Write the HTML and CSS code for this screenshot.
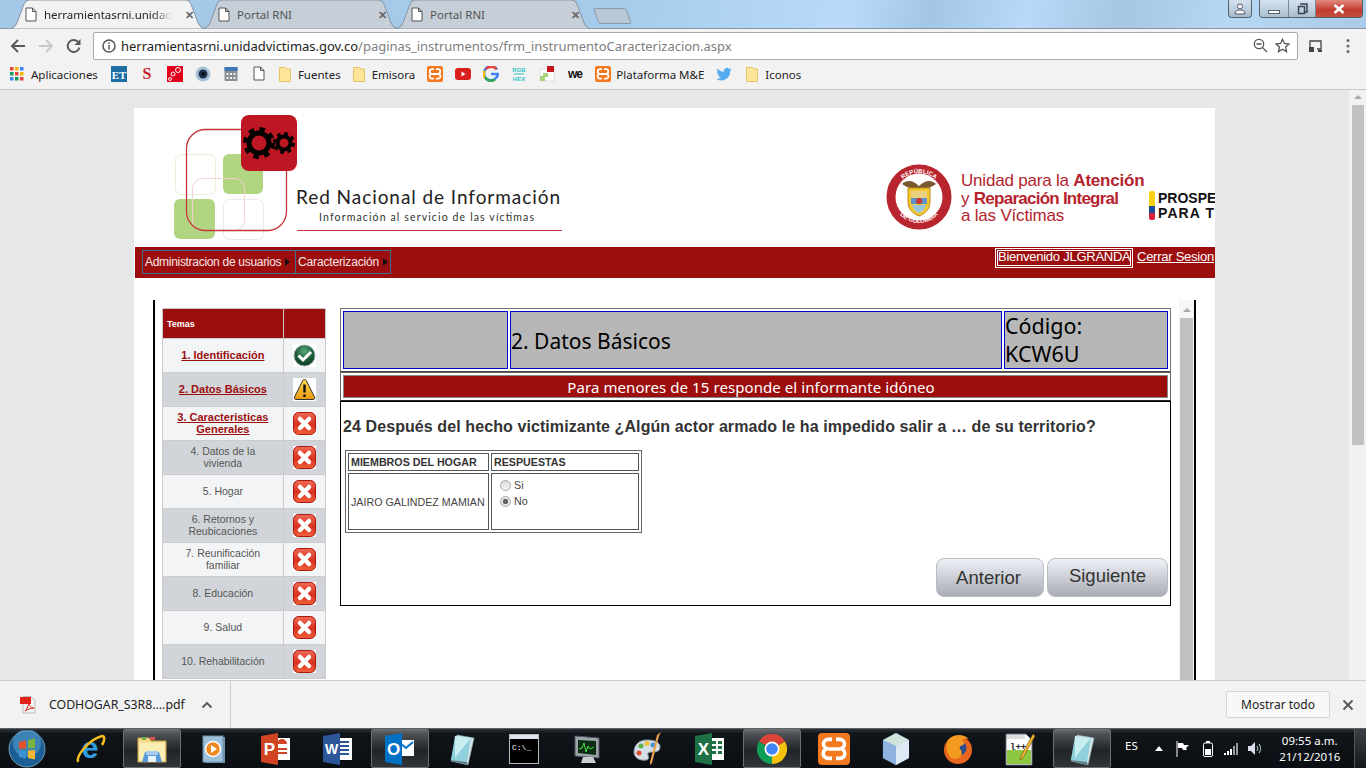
FILE: index.html
```html
<!DOCTYPE html>
<html lang="es">
<head>
    <meta charset="UTF-8">
    <title>Portal RNI</title>
    <link rel="stylesheet" href="styles.css">
</head>
<body>
    <svg class="defs" width="0" height="0">
        <defs>
            <radialGradient id="gCheck" cx="50%" cy="30%" r="70%"><stop offset="0" stop-color="#5aa878"/><stop offset=".6" stop-color="#1c5c38"/><stop offset="1" stop-color="#0b3a20"/></radialGradient>
            <linearGradient id="gWarn" x1="0" y1="0" x2="0" y2="1"><stop offset="0" stop-color="#ffd84a"/><stop offset="1" stop-color="#eb9a12"/></linearGradient>
            <linearGradient id="gFail" x1="0" y1="0" x2="0" y2="1"><stop offset="0" stop-color="#ee6a55"/><stop offset=".55" stop-color="#d9301f"/><stop offset="1" stop-color="#f0623a"/></linearGradient>
            <symbol id="tabShape" viewBox="0 0 199 28" preserveAspectRatio="none">
                <path d="M0 28c5 0 7-2 9-6l7-18c1-3 3-4 6-4h155c3 0 5 1 6 4l7 18c2 4 4 6 9 6z" stroke="#8b98a8" stroke-width="1"/>
            </symbol>
            <symbol id="doc" viewBox="0 0 12 15">
                <path d="M1 1h6.500l3.500 3.500v9.500h-10zM7.500 1v3.500h3.500" fill="#fff" stroke="#555" stroke-width="1"/>
            </symbol>
            <symbol id="folder" viewBox="0 0 12 15">
                <path d="M.5.500h6l1 1.500h4v12.500h-11z" fill="#fde69a" stroke="#e6c266"/>
            </symbol>
            <symbol id="xampp" viewBox="0 0 16 16">
                <rect width="16" height="16" rx="2" fill="#f2791f"/>
                <path d="M7 3.200H5.200a2.300 2.300 0 0 0-.3 4.600 2.300 2.300 0 0 0 .3 4.900H7M9 3.200h1.800a2.300 2.300 0 0 1 .3 4.600 2.300 2.300 0 0 1-.3 4.900H9M5 8h6" fill="none" stroke="#fff" stroke-width="1.800"/>
            </symbol>
            <symbol id="fail" viewBox="0 0 23 23">
                <rect width="23" height="23" fill="#fff"/>
                <rect x=".5" y=".5" width="22" height="22" rx="5" fill="url(#gFail)" stroke="#a8180f"/>
                <path d="M7 7l9 9M16 7l-9 9" stroke="#fff" stroke-width="4.500" stroke-linecap="round"/>
            </symbol>
            <symbol id="notepad" viewBox="0 0 30 34">
                <path d="M10 3l17 3-6 27-17-4z" fill="#d8e6ea" stroke="#8aa" stroke-width=".6"/>
                <path d="M8 4l16 2-4 24-16-2z" fill="#8fd0dc"/>
                <path d="M8 4l16 2-10 12-6 8z" fill="#c9eef2"/>
                <path d="M4 28l16 2 1 3-17-4z" fill="#5e7f8c"/>
            </symbol>
        </defs>
    </svg>

    <header class="chrome-top">
        <div class="tabstrip">
            <div class="tab tab-active">
                <svg class="tab-bg"><use href="#tabShape"/></svg>
                <svg class="tab-icon"><use href="#doc"/></svg>
                <span class="tab-title tab-fade">herramientasrni.unidadv</span>
                <span class="tab-close">✕</span>
            </div>
            <div class="tab">
                <svg class="tab-bg"><use href="#tabShape"/></svg>
                <svg class="tab-icon"><use href="#doc"/></svg>
                <span class="tab-title">Portal RNI</span>
                <span class="tab-close">✕</span>
            </div>
            <div class="tab">
                <svg class="tab-bg"><use href="#tabShape"/></svg>
                <svg class="tab-icon"><use href="#doc"/></svg>
                <span class="tab-title">Portal RNI</span>
                <span class="tab-close">✕</span>
            </div>
            <div class="newtab"></div>
            <div class="win-controls">
                <div class="win-btn win-user">
                    <svg width="12" height="12" viewBox="0 0 12 12"><circle cx="6" cy="3.500" r="2.500" fill="#fff" stroke="#556"/><path d="M1 11c0-3 2-4 5-4s5 1 5 4z" fill="#fff" stroke="#556"/></svg>
                </div>
                <div class="win-group">
                    <div class="win-btn win-min"><span class="min-bar"></span></div>
                    <div class="win-btn win-max"><svg width="11" height="12" viewBox="0 0 11 12"><path d="M3 1h7v8H8M1.500 3.500h6v7h-6z" fill="none" stroke="#3a4450" stroke-width="1.500"/></svg></div>
                    <div class="win-btn win-close"><svg width="12" height="10" viewBox="0 0 12 10"><path d="M1.500 1l9 8M10.500 1l-9 8" stroke="#fff" stroke-width="2.600"/></svg></div>
                </div>
            </div>
        </div>

        <div class="toolbar">
            <svg class="nav-icon" width="16" height="16" viewBox="0 0 16 16"><path d="M15 8H2M8 2L2 8l6 6" fill="none" stroke="#5a5a5a" stroke-width="2"/></svg>
            <svg class="nav-icon" width="16" height="16" viewBox="0 0 16 16"><path d="M1 8h13M8 2l6 6-6 6" fill="none" stroke="#c8c8c8" stroke-width="2"/></svg>
            <svg class="nav-icon" width="16" height="16" viewBox="0 0 16 16"><path d="M13.500 9.500A6 6 0 1 1 12 3.800" fill="none" stroke="#5a5a5a" stroke-width="2"/><path d="M14.500 1v6h-6z" fill="#5a5a5a"/></svg>
            <div class="omnibox">
                <svg width="14" height="14" viewBox="0 0 14 14"><circle cx="7" cy="7" r="6" fill="none" stroke="#555" stroke-width="1.500"/><path d="M7 6v4.500M7 3.500v1.500" stroke="#555" stroke-width="1.500"/></svg>
                <span class="url"><b class="url-host">herramientasrni.unidadvictimas.gov.co</b>/paginas_instrumentos/frm_instrumentoCaracterizacion.aspx</span>
                <svg width="15" height="15" viewBox="0 0 15 15"><circle cx="6" cy="6" r="4.700" fill="none" stroke="#555" stroke-width="1.300"/><path d="M3.500 6h5M9.500 9.500l4.500 4.500" stroke="#555" stroke-width="1.300"/></svg>
                <svg class="star" width="15" height="15" viewBox="0 0 15 15"><path d="M7.500 1.300l1.900 4.200 4.600.5-3.400 3.100.9 4.500-4-2.300-4 2.300.9-4.500L1 6l4.600-.5z" fill="none" stroke="#555" stroke-width="1.300"/></svg>
            </div>
            <svg class="ext-icon" width="15" height="14" viewBox="0 0 15 14"><path d="M2 8V2h11v8h-4" fill="none" stroke="#444" stroke-width="1.300"/><path d="M1 8h5v5H1zM10 11h4v2h-4z" fill="#444"/></svg>
            <svg class="menu-icon" width="4" height="16" viewBox="0 0 4 16"><circle cx="2" cy="2.500" r="1.500" fill="#666"/><circle cx="2" cy="8" r="1.500" fill="#666"/><circle cx="2" cy="13.500" r="1.500" fill="#666"/></svg>
        </div>

        <div class="bookmarks">
            <div class="bm bm-apps">
                <svg width="14" height="14" viewBox="0 0 14 14">
                    <path d="M0 0h3.500v3.500H0z" fill="#e8453c"/><path d="M5 0h3.500v3.500H5z" fill="#f4b400"/><path d="M10 0h3.500v3.500H10z" fill="#4285f4"/>
                    <path d="M0 5h3.500v3.500H0z" fill="#0f9d58"/><path d="M5 5h3.500v3.500H5z" fill="#e8453c"/><path d="M10 5h3.500v3.500H10z" fill="#f4b400"/>
                    <path d="M0 10h3.500v3.500H0z" fill="#4285f4"/><path d="M5 10h3.500v3.500H5z" fill="#0f9d58"/><path d="M10 10h3.500v3.500H10z" fill="#e8453c"/>
                </svg>
                <span>Aplicaciones</span>
            </div>
            <svg class="fav" viewBox="0 0 16 16"><rect width="16" height="16" fill="#1c6ea4"/><text x="8" y="13" class="fav-et">ET</text></svg>
            <svg class="fav" viewBox="0 0 16 16"><text x="8" y="13" class="fav-s">S</text></svg>
            <svg class="fav" viewBox="0 0 16 16"><rect width="16" height="16" fill="#e3001b"/><circle cx="11" cy="4" r="2.500" fill="none" stroke="#fff"/><circle cx="6" cy="8" r="2" fill="none" stroke="#fff"/><circle cx="3" cy="13" r="1.500" fill="none" stroke="#fff"/></svg>
            <svg class="fav" viewBox="0 0 16 16"><circle cx="8" cy="8" r="7.500" fill="#a9c2d8"/><circle cx="8" cy="8" r="4.500" fill="#1c3350"/><circle cx="8" cy="8" r="1.800" fill="#000"/></svg>
            <svg class="fav" viewBox="0 0 16 16"><rect x="1.500" y="1" width="13" height="14" rx="1" fill="#8a8f94"/><rect x="1.500" y="1" width="13" height="4" fill="#3f78b5"/><path d="M3.500 7h2v2h-2zM7 7h2v2H7zM10.500 7h2v2h-2zM3.500 11h2v2h-2zM7 11h2v2H7zM10.500 11h2v2h-2z" fill="#eee"/></svg>
            <svg class="fav" viewBox="0 0 16 16"><use href="#doc" x="2" y="0" width="12" height="15"/></svg>
            <div class="bm bm-folder"><svg width="12" height="15"><use href="#folder"/></svg><span>Fuentes</span></div>
            <div class="bm bm-folder"><svg width="12" height="15"><use href="#folder"/></svg><span>Emisora</span></div>
            <svg class="fav" viewBox="0 0 16 16"><use href="#xampp"/></svg>
            <svg class="fav" viewBox="0 0 16 16"><rect y="2" width="16" height="12" rx="3" fill="#d9201f"/><path d="M6.500 5.500l4 2.500-4 2.500z" fill="#fff"/></svg>
            <svg class="fav" viewBox="0 0 16 16"><path d="M14 3.500A7 7 0 1 0 15 8H8" fill="none" stroke="#4285f4" stroke-width="2.500"/><path d="M3 3A7 7 0 0 1 13.500 3" fill="none" stroke="#e8453c" stroke-width="2.500"/><path d="M2 11.500A7 7 0 0 0 12 13.500" fill="none" stroke="#34a853" stroke-width="2.500"/><path d="M1.500 4.500a7 7 0 0 0 0 7" fill="none" stroke="#fbbc05" stroke-width="2.500"/></svg>
            <svg class="fav" viewBox="0 0 16 16"><text x="8" y="6" class="fav-rgb">RGB</text><path d="M3 8h10" stroke="#33c3c3"/><text x="8" y="15" class="fav-rgb">HEX</text></svg>
            <svg class="fav" viewBox="0 0 16 16"><rect x="1" y="3" width="14" height="12" fill="#fff" stroke="#ddd"/><rect x="8" y="0" width="7" height="6" fill="#c5161d"/><rect x="4" y="7" width="5" height="4" fill="#a8d27a"/><rect x="1" y="10" width="5" height="5" fill="#a8d27a"/></svg>
            <svg class="fav" viewBox="0 0 16 16"><text x="8" y="12" class="fav-we">we</text></svg>
            <div class="bm bm-plain"><svg width="16" height="16" viewBox="0 0 16 16"><use href="#xampp"/></svg><span>Plataforma M&amp;E</span></div>
            <svg class="fav" viewBox="0 0 16 16"><path d="M15.500 3.300c-.6.300-1.200.4-1.800.5.700-.4 1.100-1 1.400-1.700-.6.400-1.300.6-2 .8a3.100 3.100 0 0 0-5.300 2.800C5.200 5.600 2.900 4.300 1.400 2.400c-.8 1.400-.4 3.200 1 4.100-.5 0-1-.2-1.400-.4 0 1.500 1 2.800 2.500 3.100-.5.100-1 .1-1.400 0 .4 1.200 1.600 2.100 2.900 2.100A6.300 6.300 0 0 1 .5 13a8.800 8.800 0 0 0 13.600-7.800c.6-.5 1-1.200 1.400-1.900z" fill="#55acee"/></svg>
            <div class="bm bm-folder bm-last"><svg width="12" height="15"><use href="#folder"/></svg><span>Iconos</span></div>
        </div>
    </header>

    <main class="viewport">
        <div class="sheet">
            <div class="site-header">
                <svg class="rni-logo" width="392" height="126" viewBox="0 0 392 126">
                    <rect x="3.500" y="40.500" width="40" height="40" rx="6" fill="#fff" stroke="#e6efd8"/>
                    <rect x="51" y="40" width="40" height="40" rx="6" fill="#b2d582"/>
                    <rect x="2" y="85" width="41" height="40" rx="6" fill="#b2d582"/>
                    <rect x="51.500" y="85.500" width="40" height="40" rx="6" fill="none" stroke="#efe8e9"/>
                    <rect x="20.500" y="78.500" width="52" height="52" rx="10" fill="none" stroke="#f2d2d4" transform="translate(0 -14)"/>
                    <rect x="14.500" y="15.500" width="100" height="101" rx="19" fill="none" stroke="#c8343d" stroke-width="1.300"/>
                    <rect x="69" y="1" width="56" height="56" rx="8" fill="#bc1722"/>
                    <circle cx="87" cy="29" r="10" fill="none" stroke="#000" stroke-width="5"/>
                    <circle cx="87" cy="29" r="14" fill="none" stroke="#000" stroke-width="4" stroke-dasharray="5.500 5.500"/>
                    <circle cx="112" cy="29" r="6.500" fill="none" stroke="#000" stroke-width="4"/>
                    <circle cx="112" cy="29" r="9.500" fill="none" stroke="#000" stroke-width="3" stroke-dasharray="3.730 3.730"/>
                    <text x="124" y="90" class="logo-title" textLength="264">Red Nacional de Información</text>
                    <text x="147" y="107" class="logo-sub" textLength="215">Información al servicio de las víctimas</text>
                    <path d="M125 116.500h265" stroke="#c8343d"/>
                </svg>
                <div class="partner-logos">
                    <svg class="escudo" width="66" height="66" viewBox="0 0 66 66">
                        <circle cx="33" cy="33" r="28" fill="#fff" stroke="#b9252e" stroke-width="9"/>
                        <path id="arcTop" d="M9 33a24 24 0 0 1 48 0" fill="none"/>
                        <path id="arcBot" d="M7 33a26 26 0 0 0 52 0" fill="none"/>
                        <text class="escudo-text"><textPath href="#arcTop" startOffset="50%">REPÚBLICA</textPath></text>
                        <text class="escudo-text"><textPath href="#arcBot" startOffset="50%">DE COLOMBIA</textPath></text>
                        <path d="M16 20c6-5 11-3 17 2 6-5 11-7 17-2-4 3-9 5-17 5s-13-2-17-5z" fill="#7a5a30"/>
                        <path d="M22 24h22v14c0 8-6 12-11 14-5-2-11-6-11-14z" fill="#f3c92f" stroke="#b88a1d"/>
                        <rect x="25" y="27" width="16" height="7" fill="#e8d080"/>
                        <rect x="25" y="34" width="16" height="6" fill="#5f93c8"/>
                        <path d="M26 41h14c-1 4-4 7-7 8-3-1-6-4-7-8z" fill="#9bc7dd"/>
                        <circle cx="33" cy="37" r="3" fill="#c33"/>
                    </svg>
                    <div class="unidad">
                        <div>Unidad para la <b>Atención</b></div>
                        <div>y <b class="tight">Reparación Integral</b></div>
                        <div>a las Víctimas</div>
                    </div>
                    <div class="prospera">
                        <div class="flagbar"></div>
                        <div class="prospera-text">PROSPE<br><span class="wide">PARA T</span></div>
                    </div>
                </div>
            </div>

            <nav class="navbar">
                <div class="menu">
                    <a class="menu-item menu-admin">Administracion de usuarios<i class="caret"></i></a>
                    <a class="menu-item menu-car">Caracterización<i class="caret"></i></a>
                </div>
                <div class="user-links">
                    <span class="welcome">Bienvenido JLGRANDA</span>
                    <a class="logout">Cerrar Sesion</a>
                </div>
            </nav>

            <div class="frame">
                <table class="topics">
                    <tr class="topics-head"><th class="topic-name">Temas</th><th class="topic-state"></th></tr>
                    <tr class="light"><td class="topic-name"><a>1. Identificación</a></td>
                        <td class="topic-state"><svg width="23" height="23" viewBox="0 0 23 23"><rect width="23" height="23" fill="#fff"/><circle cx="11.500" cy="11.500" r="10.500" fill="url(#gCheck)" stroke="#9aa"/><path d="M5.500 11.500l4.500 4.500 8-8" fill="none" stroke="#fff" stroke-width="3"/></svg></td></tr>
                    <tr class="dark"><td class="topic-name"><a>2. Datos Básicos</a></td>
                        <td class="topic-state"><svg width="23" height="23" viewBox="0 0 23 23"><rect width="23" height="23" fill="#fff"/><path d="M11.500 1.500c1 0 1.500.5 2 1.500l8 16c.5 1.500 0 2.500-1.500 2.500h-17c-1.500 0-2-1-1.500-2.500l8-16c.5-1 1-1.500 2-1.500z" fill="url(#gWarn)" stroke="#333"/><path d="M11.500 6.500v8M11.500 16.500v2.500" stroke="#111" stroke-width="2.400"/></svg></td></tr>
                    <tr class="light"><td class="topic-name"><a>3. Caracteristicas<br>Generales</a></td>
                        <td class="topic-state"><svg width="23" height="23"><use href="#fail"/></svg></td></tr>
                    <tr class="dark"><td class="topic-name">4. Datos de la<br>vivienda</td>
                        <td class="topic-state"><svg width="23" height="23"><use href="#fail"/></svg></td></tr>
                    <tr class="light"><td class="topic-name">5. Hogar</td>
                        <td class="topic-state"><svg width="23" height="23"><use href="#fail"/></svg></td></tr>
                    <tr class="dark"><td class="topic-name">6. Retornos y<br>Reubicaciones</td>
                        <td class="topic-state"><svg width="23" height="23"><use href="#fail"/></svg></td></tr>
                    <tr class="light"><td class="topic-name">7. Reunificación<br>familiar</td>
                        <td class="topic-state"><svg width="23" height="23"><use href="#fail"/></svg></td></tr>
                    <tr class="dark"><td class="topic-name">8. Educación</td>
                        <td class="topic-state"><svg width="23" height="23"><use href="#fail"/></svg></td></tr>
                    <tr class="light"><td class="topic-name">9. Salud</td>
                        <td class="topic-state"><svg width="23" height="23"><use href="#fail"/></svg></td></tr>
                    <tr class="dark"><td class="topic-name">10. Rehabilitación</td>
                        <td class="topic-state"><svg width="23" height="23"><use href="#fail"/></svg></td></tr>
                </table>

                <div class="form-col">
                    <table class="title-table">
                        <tr>
                            <td class="title-blank"></td>
                            <td class="title-main">2. Datos Básicos</td>
                            <td class="title-code">Código:<br>KCW6U</td>
                        </tr>
                    </table>
                    <table class="notice-table">
                        <tr><td>Para menores de 15 responde el informante idóneo</td></tr>
                    </table>
                    <section class="question">
                        <h3>24 Después del hecho victimizante ¿Algún actor armado le ha impedido salir a … de su territorio?</h3>
                        <table class="answers">
                            <tr><th class="col-member">MIEMBROS DEL HOGAR</th><th class="col-answer">RESPUESTAS</th></tr>
                            <tr>
                                <td class="col-member">JAIRO GALINDEZ MAMIAN</td>
                                <td class="col-answer options">
                                    <label class="opt"><input type="radio" name="r24" disabled> Si</label>
                                    <label class="opt"><input type="radio" name="r24" checked disabled> No</label>
                                </td>
                            </tr>
                        </table>
                        <div class="form-buttons">
                            <button class="btn btn-prev">Anterior</button>
                            <button class="btn btn-next">Siguiente</button>
                        </div>
                    </section>
                </div>

                <div class="inner-scroll"><div class="arrow-up"></div><div class="inner-thumb"></div></div>
            </div>
        </div>
        <div class="page-scroll"><div class="arrow-up"></div><div class="page-thumb"></div></div>
    </main>

    <div class="downloads">
        <svg class="pdf-icon" width="16" height="18" viewBox="0 0 16 18"><path d="M3 .5h8l4 4V17H3z" fill="#f4f4f4" stroke="#bbb"/><rect y="1" width="11" height="7" fill="#e2231a"/><path d="M5 15c2-2 4-6 3.500-8C10 11 12 12 14 12c-3 0-6 1-9 3z" fill="none" stroke="#e2231a"/></svg>
        <span class="dl-name">CODHOGAR_S3R8....pdf</span>
        <svg class="dl-chevron" width="12" height="8" viewBox="0 0 12 8"><path d="M1.500 6.500L6 2l4.500 4.500" fill="none" stroke="#555" stroke-width="1.800"/></svg>
        <div class="dl-sep"></div>
        <button class="dl-all">Mostrar todo</button>
        <svg class="dl-close" width="12" height="12" viewBox="0 0 12 12"><path d="M1.500 1.500l9 9M10.500 1.500l-9 9" stroke="#555" stroke-width="1.800"/></svg>
    </div>

    <footer class="taskbar">
        <div class="start-orb">
            <svg width="38" height="38" viewBox="0 0 38 38"><circle cx="19" cy="19" r="18" fill="#1d5f94" stroke="#6b9ab8"/><circle cx="19" cy="13" r="14" fill="#5ea7d6" opacity=".5"/><path d="M11 12l7-1.500v8l-7 .5z" fill="#e2522c"/><path d="M20 10l7-1.500v9.500l-7 .5z" fill="#7ab542"/><path d="M11 21l7-.5v8l-7-1.500z" fill="#3c94d6"/><path d="M20 20.500l7-.5v9.500l-7-1.500z" fill="#f2b632"/></svg>
        </div>
        <div class="apps">
            <div class="app"><svg width="32" height="34" viewBox="0 0 32 34"><text x="16" y="26" class="ic-ie">e</text><path d="M4 30c-2-6 10-22 24-26 3 0 3 4 0 9" fill="none" stroke="#f2bd1d" stroke-width="2.500"/></svg></div>
            <div class="app app-on"><svg width="32" height="32" viewBox="0 0 32 32"><path d="M2 5h11l2 3h15v21H2z" fill="#f7dd8c" stroke="#c9a64a"/><path d="M3 10h26v18H3z" fill="#fbeeb4"/><path d="M6 4h4v3H6z" fill="#6ab04c"/><path d="M14 4h5v3h-5z" fill="#d9534f"/><path d="M9 19h14l3 10H6z" fill="#5b9bd5"/><path d="M10 18h12v4H10z" fill="#a6cff0"/><path d="M12 23h8v6h-8z" fill="#e8f3fb"/></svg></div>
            <div class="app"><svg width="28" height="32" viewBox="0 0 28 32"><rect x="5" y="4" width="20" height="26" fill="#6c96b4"/><rect x="3" y="3" width="20" height="26" fill="#9dc0d8" stroke="#6c8ea6"/><circle cx="13" cy="16" r="7.500" fill="#ee8a1d" stroke="#fff" stroke-width="1.500"/><path d="M11 12l6 4-6 4z" fill="#fff"/></svg></div>
            <div class="app"><svg width="30" height="34" viewBox="0 0 30 34"><path d="M13 6h16v22H13z" fill="#fff"/><path d="M16 12a5 5 0 0 1 10 0h-5zM16 16h10v2H16zM16 20h10v2H16z" fill="#d04423"/><path d="M0 4l17-3v32L0 30z" fill="#d04423"/><text x="8.500" y="23" class="ic-letter">P</text></svg></div>
            <div class="app"><svg width="30" height="34" viewBox="0 0 30 34"><path d="M13 6h16v22H13z" fill="#fff"/><path d="M16 9h10v2H16zM16 13h10v2H16zM16 17h10v2H16zM16 21h10v2H16z" fill="#2b579a"/><path d="M0 4l17-3v32L0 30z" fill="#2b579a"/><text x="8.500" y="22" class="ic-letter ic-sm">W</text></svg></div>
            <div class="app app-on"><svg width="30" height="34" viewBox="0 0 30 34"><path d="M13 8h16v16H13z" fill="#fff"/><path d="M14 10l7 6 7-6" fill="none" stroke="#0072c6" stroke-width="2"/><path d="M0 4l17-3v32L0 30z" fill="#0072c6"/><text x="8.500" y="23" class="ic-letter">O</text></svg></div>
            <div class="app"><svg width="30" height="34" viewBox="0 0 30 34"><use href="#notepad"/></svg></div>
            <div class="app"><svg width="30" height="30" viewBox="0 0 30 30"><rect x=".5" y=".5" width="29" height="29" fill="#000" stroke="#bbb"/><rect x="1" y="1" width="28" height="4" fill="#dfe5ea"/><text x="3" y="16" class="ic-cmd">C:\_</text></svg></div>
            <div class="app"><svg width="30" height="34" viewBox="0 0 30 34"><path d="M4 4l24 2v20L4 24z" fill="#9aa4a8" stroke="#556"/><path d="M7 8l18 1v14L7 21z" fill="#0b2b12"/><path d="M8 17l3-1 2-5 2 9 2-6 2 3 4-2" fill="none" stroke="#4de04d"/><path d="M12 25h10l3 6H10z" fill="#c8ced2"/></svg></div>
            <div class="app"><svg width="30" height="36" viewBox="0 0 30 36"><path d="M14 9C5 9 1 15 1 21c0 6 6 9 12 8 3 0 3-3 2-5s1-3 4-3 8 0 8-5-6-7-13-7z" fill="#d4dfe8" stroke="#8a9aa8"/><circle cx="8" cy="15" r="2.500" fill="#5fb346"/><circle cx="14" cy="12.500" r="2.500" fill="#f0c330"/><circle cx="6" cy="22" r="2.500" fill="#e04f2f"/><circle cx="20" cy="14" r="2.500" fill="#3d8fd6"/><path d="M28 1l-2 4-7 27-2 2 0-3 7-27z" fill="#e6a050"/></svg></div>
            <div class="app"><svg width="30" height="34" viewBox="0 0 30 34"><path d="M13 6h16v22H13z" fill="#fff"/><path d="M17 9h4v3h-4zM23 9h4v3h-4zM17 14h4v3h-4zM23 14h4v3h-4zM17 19h4v3h-4zM23 19h4v3h-4z" fill="#1e7145"/><path d="M0 4l17-3v32L0 30z" fill="#1e7145"/><text x="8.500" y="23" class="ic-letter">X</text></svg></div>
            <div class="app app-on"><svg width="30" height="30" viewBox="0 0 30 30"><path d="M15 15L28 7.500A15 15 0 0 0 2 7.500z" fill="#db4437"/><path d="M15 15L15 30A15 15 0 0 0 28 7.500z" fill="#f4c20d"/><path d="M15 15L2 7.500A15 15 0 0 0 15 30z" fill="#0f9d58"/><circle cx="15" cy="15" r="7.500" fill="#fff"/><circle cx="15" cy="15" r="5.800" fill="#4285f4"/></svg></div>
            <div class="app"><svg width="32" height="32" viewBox="0 0 16 16"><use href="#xampp"/></svg></div>
            <div class="app"><svg width="28" height="34" viewBox="0 0 28 34"><path d="M14 1l13 7v18l-13 7-13-7V8z" fill="#b9d3ea" stroke="#26304a" stroke-width=".8"/><path d="M14 1l13 7-13 6L1 8z" fill="#cfe4da"/><path d="M14 14v19l13-7V8z" fill="#dfe9f5"/><path d="M14 14v19L1 26V8z" fill="#8fb3e0"/></svg></div>
            <div class="app"><svg width="30" height="32" viewBox="0 0 30 32"><circle cx="15" cy="17" r="14" fill="#e8651d"/><circle cx="16" cy="15" r="7.500" fill="#2a4d8f"/><path d="M5 7c5-6 15-7 21-1-4-1-6 0-7 2 3 0 3 3 1 4-4 1-4 3-2 5 2 3 0 9-6 9C6 26 1 16 5 7z" fill="#f39a1f"/></svg></div>
            <div class="app"><svg width="32" height="34" viewBox="0 0 32 34"><path d="M2 2h20l6 6v25H2z" fill="#fff" stroke="#667"/><path d="M3 18h24v14H3z" fill="#8dc63f"/><path d="M3 3h18v4H3z" fill="#ddd"/><text x="6" y="18" class="ic-npp">l++</text><path d="M29 2l2 2-12 22-3 2 1-4z" fill="#f2b632" stroke="#6b4b12" stroke-width=".6"/></svg></div>
            <div class="app app-on"><svg width="30" height="34" viewBox="0 0 30 34"><use href="#notepad"/></svg></div>
        </div>
        <div class="tray">
            <span class="tray-lang">ES</span>
            <svg width="8" height="5" viewBox="0 0 8 5"><path d="M0 5l4-5 4 5z" fill="#fff"/></svg>
            <svg width="14" height="16" viewBox="0 0 14 16"><path d="M1 0v16" stroke="#fff"/><path d="M2 2h5l1 2h5l-3 3 1 2H7L6 7H2z" fill="#fff"/></svg>
            <svg width="10" height="16" viewBox="0 0 10 16"><rect x=".5" y="2" width="9" height="13.500" rx="1.500" fill="none" stroke="#fff"/><path d="M3 0h4v2H3z" fill="#fff"/><rect x="2" y="8" width="6" height="6" fill="#fff"/></svg>
            <svg class="tray-signal" width="14" height="12" viewBox="0 0 14 12"><path d="M0 10h2v2H0zM3 8h2v4H3zM6 6h2v6H6z" fill="#fff"/><path d="M9 3h2v9H9zM12 0h2v12h-2z" fill="#999"/></svg>
            <svg class="tray-sound" width="15" height="15" viewBox="0 0 15 15"><path d="M0 5h3l4-4v13l-4-4H0z" fill="#dde"/><path d="M9 5c1 1.500 1 3.500 0 5M11 3c2 2.500 2 6.500 0 9" fill="none" stroke="#cdd" stroke-width="1"/></svg>
            <div class="clock"><div>09:55 a.m.</div><div>21/12/2016</div></div>
            <div class="show-desktop"></div>
        </div>
    </footer>
</body>
</html>
```

FILE: styles.css
```css
* {
    box-sizing: border-box;
}
html, body {
    height: 100%;
}
body {
    margin: 0;
    width: 1366px;
    height: 768px;
    overflow: hidden;
    display: flex;
    flex-direction: column;
    font-family: "Liberation Sans", Arial, sans-serif;
    background: #f2f2f2;
}
.defs {
    position: absolute;
}
table {
    border-collapse: separate;
}

/* browser chrome */
.chrome-top {
    height: 90px;
    flex: none;
    font-family: "Noto Sans", sans-serif;
}
.tabstrip {
    height: 29px;
    display: flex;
    padding-left: 8px;
    background: linear-gradient(102deg, #a4c8e8 0%, #a6cbea 45%, #b9dbf9 62%, #a2c6e4 68%, #b8daf8 75%, #a5c7e3 82%, #b6d8f5 90%, #a9cbe8 100%);
    border-bottom: 1px solid #8b98a8;
}
.tab {
    position: relative;
    width: 199px;
    height: 29px;
    margin-right: -6px;
    padding-left: 17px;
    display: flex;
    align-items: center;
}
.tab-active {
    z-index: 2;
}
.tab-bg {
    position: absolute;
    left: 0;
    top: 0;
    width: 199px;
    height: 29px;
    fill: #c6ced7;
}
.tab-active .tab-bg {
    fill: #f2f2f2;
}
.tab-icon {
    position: relative;
    width: 12px;
    height: 15px;
    margin-right: 7px;
    flex: none;
}
.tab-title {
    position: relative;
    width: 128px;
    font-size: 11.500px;
    color: #555;
    white-space: nowrap;
    overflow: hidden;
}
.tab-fade {
    color: #222;
    -webkit-mask-image: linear-gradient(90deg, #000 85%, transparent);
    mask-image: linear-gradient(90deg, #000 85%, transparent);
}
.tab-close {
    position: relative;
    margin-left: 13px;
    font-size: 11px;
    font-weight: bold;
    color: #666;
}
.newtab {
    width: 33px;
    height: 16px;
    margin: 8px 0 0 9px;
    background: #b9c8d6;
    border: 1px solid #8b98a8;
    border-radius: 2px;
    transform: skewX(20deg);
}
.win-controls {
    margin-left: auto;
    margin-right: 3px;
    display: flex;
    gap: 7px;
    height: 18px;
}
.win-btn {
    height: 18px;
    display: flex;
    align-items: center;
    justify-content: center;
    background: linear-gradient(#d4e2ee, #a9bccd);
}
.win-user {
    width: 24px;
    border: 1px solid #54606e;
    border-top: 0;
    border-radius: 0 0 4px 4px;
}
.win-group {
    display: flex;
    border: 1px solid #54606e;
    border-top: 0;
    border-radius: 0 0 4px 4px;
    overflow: hidden;
}
.win-min {
    width: 29px;
    border-right: 1px solid #7b8896;
    align-items: flex-end;
    padding-bottom: 4px;
}
.min-bar {
    width: 12px;
    height: 4px;
    background: #fff;
    border: 1px solid #56616e;
}
.win-max {
    width: 27px;
    border-right: 1px solid #7b8896;
}
.win-close {
    width: 46px;
    background: linear-gradient(#e0897c, #c33c2f 55%, #c0503f);
}
.toolbar {
    height: 33px;
    display: flex;
    align-items: center;
    padding: 0 16px 0 10px;
    background: #f2f2f2;
}
.nav-icon {
    margin-right: 12px;
}
.omnibox {
    width: 1205px;
    height: 28px;
    margin-left: -1px;
    display: flex;
    align-items: center;
    padding: 0 7px 0 8px;
    background: #fff;
    border: 1px solid #a9a9a9;
    border-radius: 2px;
}
.url {
    flex: 1;
    margin-left: 5px;
    font-size: 13px;
    letter-spacing: -.02px;
    color: #808080;
    white-space: nowrap;
}
.url-host {
    font-weight: normal;
    color: #222;
}
.star {
    margin-left: 7px;
}
.ext-icon {
    margin-left: 10px;
}
.menu-icon {
    margin-left: 23px;
}
.bookmarks {
    height: 28px;
    display: flex;
    align-items: center;
    gap: 12px;
    padding: 0 0 3px 10px;
    background: #f2f2f2;
    border-bottom: 1px solid #c8c8c8;
    font-size: 11.500px;
    color: #222;
}
.bm {
    display: flex;
    align-items: center;
    gap: 7px;
    white-space: nowrap;
}
.bm-apps {
    margin-right: 1px;
}
.bm-plain {
    gap: 5px;
}
.bm-folder {
    gap: 7px;
}
.bm-last {
    margin-left: 2px;
}
.fav {
    width: 16px;
    height: 16px;
    flex: none;
}
.fav-et {
    font: bold 11px "Liberation Serif", serif;
    fill: #fff;
    text-anchor: middle;
}
.fav-s {
    font: bold 16px "Liberation Serif", serif;
    fill: #c8202c;
    text-anchor: middle;
}
.fav-rgb {
    font: bold 6px "Liberation Sans", sans-serif;
    fill: #33c3c3;
    text-anchor: middle;
}
.fav-we {
    font: bold 12px "Liberation Sans", sans-serif;
    fill: #111;
    text-anchor: middle;
    letter-spacing: -1px;
}

/* page area */
.viewport {
    height: 590px;
    flex: none;
    display: flex;
    justify-content: space-between;
    padding: 18px 0 0 134px;
    overflow: hidden;
    background: #e6e7e8;
}
.sheet {
    width: 1081px;
    height: 700px;
    flex: none;
    background: #fff;
}
.site-header {
    height: 139px;
    display: flex;
    justify-content: space-between;
    overflow: hidden;
    padding-left: 38px;
}
.rni-logo {
    margin-top: 6px;
    flex: none;
}
.logo-title {
    font: 19px Lato, sans-serif;
    fill: #222;
}
.logo-sub {
    font: 10.500px Lato, sans-serif;
    fill: #333;
}
.partner-logos {
    display: flex;
    width: 329px;
    flex: none;
    padding-top: 56px;
    overflow: hidden;
}
.escudo {
    flex: none;
}
.escudo-text {
    font: bold 6px "Liberation Sans", sans-serif;
    fill: #fff;
    text-anchor: middle;
}
.unidad {
    margin: 8px 0 0 9px;
    width: 188px;
    flex: none;
    font: 17px/17.500px "Liberation Sans", sans-serif;
    color: #b5232e;
    white-space: nowrap;
    letter-spacing: -.2px;
}
.tight {
    letter-spacing: -.75px;
}
.prospera {
    display: flex;
    margin: 27px 0 0 0;
    flex: none;
}
.flagbar {
    width: 6px;
    height: 29px;
    border-radius: 2px;
    background: linear-gradient(#fbd116 50%, #1b4da0 50%, #1b4da0 75%, #d6203a 75%);
}
.prospera-text {
    margin-left: 3px;
    font: bold 14px/14.500px "Liberation Sans", sans-serif;
    color: #111;
    white-space: nowrap;
}
.wide {
    letter-spacing: 1.100px;
}
.navbar {
    height: 31px;
    margin-left: 1px;
    display: flex;
    justify-content: space-between;
    background: #9c0e0e;
    color: #fff;
    font-size: 12px;
    overflow: hidden;
}
.menu {
    display: flex;
    padding: 3px 0 0 7px;
    height: 27px;
}
.menu-item {
    height: 24px;
    display: flex;
    align-items: center;
    padding-left: 2px;
    border: 1px solid #3f6f8f;
    color: #f6e6e6;
    letter-spacing: -.15px;
}
.menu-admin {
    width: 154px;
    letter-spacing: -.3px;
}
.menu-car {
    width: 96px;
    margin-left: -1px;
}
.caret {
    margin-left: 4px;
    border-left: 5px solid #111;
    border-top: 4px solid transparent;
    border-bottom: 4px solid transparent;
}
.user-links {
    display: flex;
    align-items: flex-start;
    padding-top: 1px;
    white-space: nowrap;
    width: 220px;
    font-size: 13px;
    letter-spacing: -.25px;
}
.welcome {
    width: 138px;
    height: 20px;
    line-height: 16px;
    padding-left: 2px;
    border: 1px solid #fff;
    outline: 1px solid #fff;
    outline-offset: -3px;
}
.logout {
    margin-left: 4px;
    text-decoration: underline;
    line-height: 18px;
}

/* content frame */
.frame {
    display: flex;
    align-items: flex-start;
    width: 1043px;
    height: 400px;
    margin: 22px 0 0 19px;
    padding: 8px 0 0 7px;
    border-left: 2px solid #000;
    border-right: 2px solid #000;
}
.topics {
    width: 164px;
    flex: none;
    border-spacing: 0;
    border-collapse: collapse;
    margin-right: 14px;
    font-size: 10.500px;
    color: #555;
    text-align: center;
}
.topics td, .topics th {
    border: 1px solid #ccc;
    padding: 0;
    line-height: 12px;
}
.topics tr {
    height: 34px;
}
.topics td.topic-name {
    padding-bottom: 2px;
}
.topics-head {
    background: #9c0e0e;
    color: #fff;
}
.topics .topics-head {
    height: 30px;
}
.topics-head th {
    text-align: left;
    padding-left: 4px;
    font-size: 9px;
}
.topic-name {
    width: 120px;
}
.topic-state {
    width: 42px;
}
.topic-state svg {
    display: block;
    margin: 0 auto;
}
.topic-name a {
    color: #9c0e0e;
    font-size: 11px;
    font-weight: bold;
    text-decoration: underline;
}
.light {
    background: #f3f4f6;
}
.dark {
    background: #d1d5d9;
}
.form-col {
    width: 831px;
    flex: none;
}
.title-table {
    width: 831px;
    height: 64px;
    border: 1px solid #777;
    border-bottom-color: #444;
    border-spacing: 2px;
    table-layout: fixed;
    font-family: "Noto Sans", sans-serif;
}
.title-table td {
    background: #b7b7b7;
    border: 1px solid #0000c8;
    padding: 0;
    color: #000;
    font-size: 21px;
    line-height: 27px;
}
.title-blank {
    width: 165px;
}
.title-main {
    width: 492px;
}
.title-table .title-main {
    padding-top: 2px;
}
.title-table .title-code {
    font-size: 21.500px;
    line-height: 28px;
}
.notice-table {
    width: 831px;
    height: 29px;
    border: 1px solid #666;
    border-bottom: 1px solid #222;
    border-spacing: 2px;
    font-family: "Noto Sans", sans-serif;
}
.notice-table td {
    background: #9c0e0e;
    border: 1px solid #888;
    padding: 0 9px 0 0;
    color: #fff;
    font-size: 15px;
    letter-spacing: .08px;
    line-height: 18px;
    text-align: center;
}
.question {
    height: 205px;
    padding: 15px 2px 0 2px;
    border: 1px solid #000;
}
.question h3 {
    margin: 0 0 14px;
    font-size: 16px;
    line-height: 19px;
    letter-spacing: .09px;
    color: #333;
}
.answers {
    width: 297px;
    height: 83px;
    margin-left: 2px;
    border: 1px solid #666;
    border-spacing: 2px;
    font-size: 10.700px;
    color: #444;
}
.answers th, .answers td {
    border: 1px solid #555;
    padding: 0 2px;
    text-align: left;
}
.answers th {
    height: 18px;
    color: #333;
}
.col-member {
    width: 141px;
    white-space: nowrap;
}
.answers td.options {
    vertical-align: top;
    padding-top: 3px;
}
.opt {
    display: flex;
    align-items: center;
    gap: 3px;
    height: 16px;
    padding-left: 6px;
}
.opt input {
    appearance: none;
    -webkit-appearance: none;
    margin: 0;
    width: 11px;
    height: 11px;
    border: 1px solid #a8a8a8;
    border-radius: 50%;
    background: linear-gradient(#dcdcdc, #f4f4f4);
}
.opt input:checked {
    background: radial-gradient(circle, #666 0, #666 2.500px, #e4e4e4 3px);
}
.form-buttons {
    display: flex;
    justify-content: flex-end;
    gap: 3px;
    margin-top: 25px;
}
.btn {
    height: 39px;
    padding: 0;
    border: 1px solid #b9bdc2;
    border-radius: 8px;
    background: linear-gradient(#eef2f8, #a9adb3);
    font: 18.500px "Liberation Sans", sans-serif;
    color: #333;
}
.btn-prev {
    width: 108px;
    padding: 0 3px 0 0;
}
.btn-next {
    width: 121px;
    padding-bottom: 3px;
}
.inner-scroll {
    width: 15px;
    height: 400px;
    flex: none;
    margin: -8px 0 0 8px;
    padding: 8px 1px 0;
    background: #f6f6f6;
}
.arrow-up {
    width: 0;
    margin: 0 auto;
    border: 4px solid transparent;
    border-top: 0;
    border-bottom: 4px solid #a8a8a8;
}
.inner-thumb {
    height: 380px;
    margin-top: 6px;
    background: #c1c1c1;
}
.page-scroll {
    width: 17px;
    height: 590px;
    flex: none;
    margin-top: -18px;
    padding: 5px 2px 0 3px;
    background: #f1f1f1;
}
.page-thumb {
    height: 340px;
    margin-top: 6px;
    background: #c1c1c1;
}

/* download shelf */
.downloads {
    height: 48px;
    flex: none;
    display: flex;
    align-items: center;
    padding-left: 20px;
    background: #f2f2f2;
    border-top: 1px solid #ccc;
    font-family: "Noto Sans", sans-serif;
    font-size: 12px;
    color: #222;
}
.dl-name {
    width: 138px;
    margin-left: 13px;
    font-size: 12.300px;
    white-space: nowrap;
}
.dl-chevron {
    margin-left: 14px;
}
.dl-sep {
    width: 1px;
    height: 47px;
    margin-left: 17px;
    background: #ccc;
}
.dl-all {
    width: 104px;
    height: 27px;
    margin-left: auto;
    padding: 0;
    background: #f8f8f8;
    border: 1px solid #d4d4d4;
    border-radius: 2px;
    font: inherit;
    color: #222;
}
.dl-close {
    margin: 0 12px 0 12px;
}

/* windows taskbar */
.taskbar {
    height: 40px;
    flex: none;
    display: flex;
    background: linear-gradient(#2c3238 0, #10151a 12%, #0a0e12 100%);
    border-top: 1px solid #5b6167;
}
.start-orb {
    width: 61px;
    padding: 1px 0 0 8px;
    flex: none;
}
.apps {
    display: flex;
    gap: 4px;
    flex: none;
}
.app {
    width: 58px;
    height: 39px;
    display: flex;
    align-items: center;
    justify-content: center;
}
.app-on {
    background: linear-gradient(rgba(255,255,255,.3), rgba(255,255,255,.08) 55%, rgba(255,255,255,.16));
    border: 1px solid #6a6f74;
    border-radius: 2px;
}
.ic-ie {
    font: bold 30px "Liberation Sans", sans-serif;
    fill: #2f9de4;
    text-anchor: middle;
}
.ic-letter {
    font: bold 17px "Liberation Sans", sans-serif;
    fill: #fff;
    text-anchor: middle;
}
.ic-sm {
    font-size: 14px;
}
.ic-cmd {
    font: 8px "Liberation Mono", monospace;
    fill: #fff;
}
.ic-npp {
    font: bold 9px "Liberation Mono", monospace;
    fill: #222;
}
.tray {
    flex: 1;
    display: flex;
    align-items: center;
    gap: 13px;
    padding-left: 14px;
    color: #fff;
    font-family: "Noto Sans", sans-serif;
    font-size: 11.500px;
}
.tray-lang {
    margin: 0 4px 6px 0;
}
.tray-signal {
    margin-left: -2px;
}
.tray-sound {
    margin-left: -3px;
}
.clock {
    width: 62px;
    margin-left: 3px;
    text-align: center;
    line-height: 16px;
    white-space: nowrap;
}
.show-desktop {
    width: 14px;
    height: 39px;
    margin-left: auto;
    background: linear-gradient(#3a4046, #14181c);
    border-left: 1px solid #555;
}
```
